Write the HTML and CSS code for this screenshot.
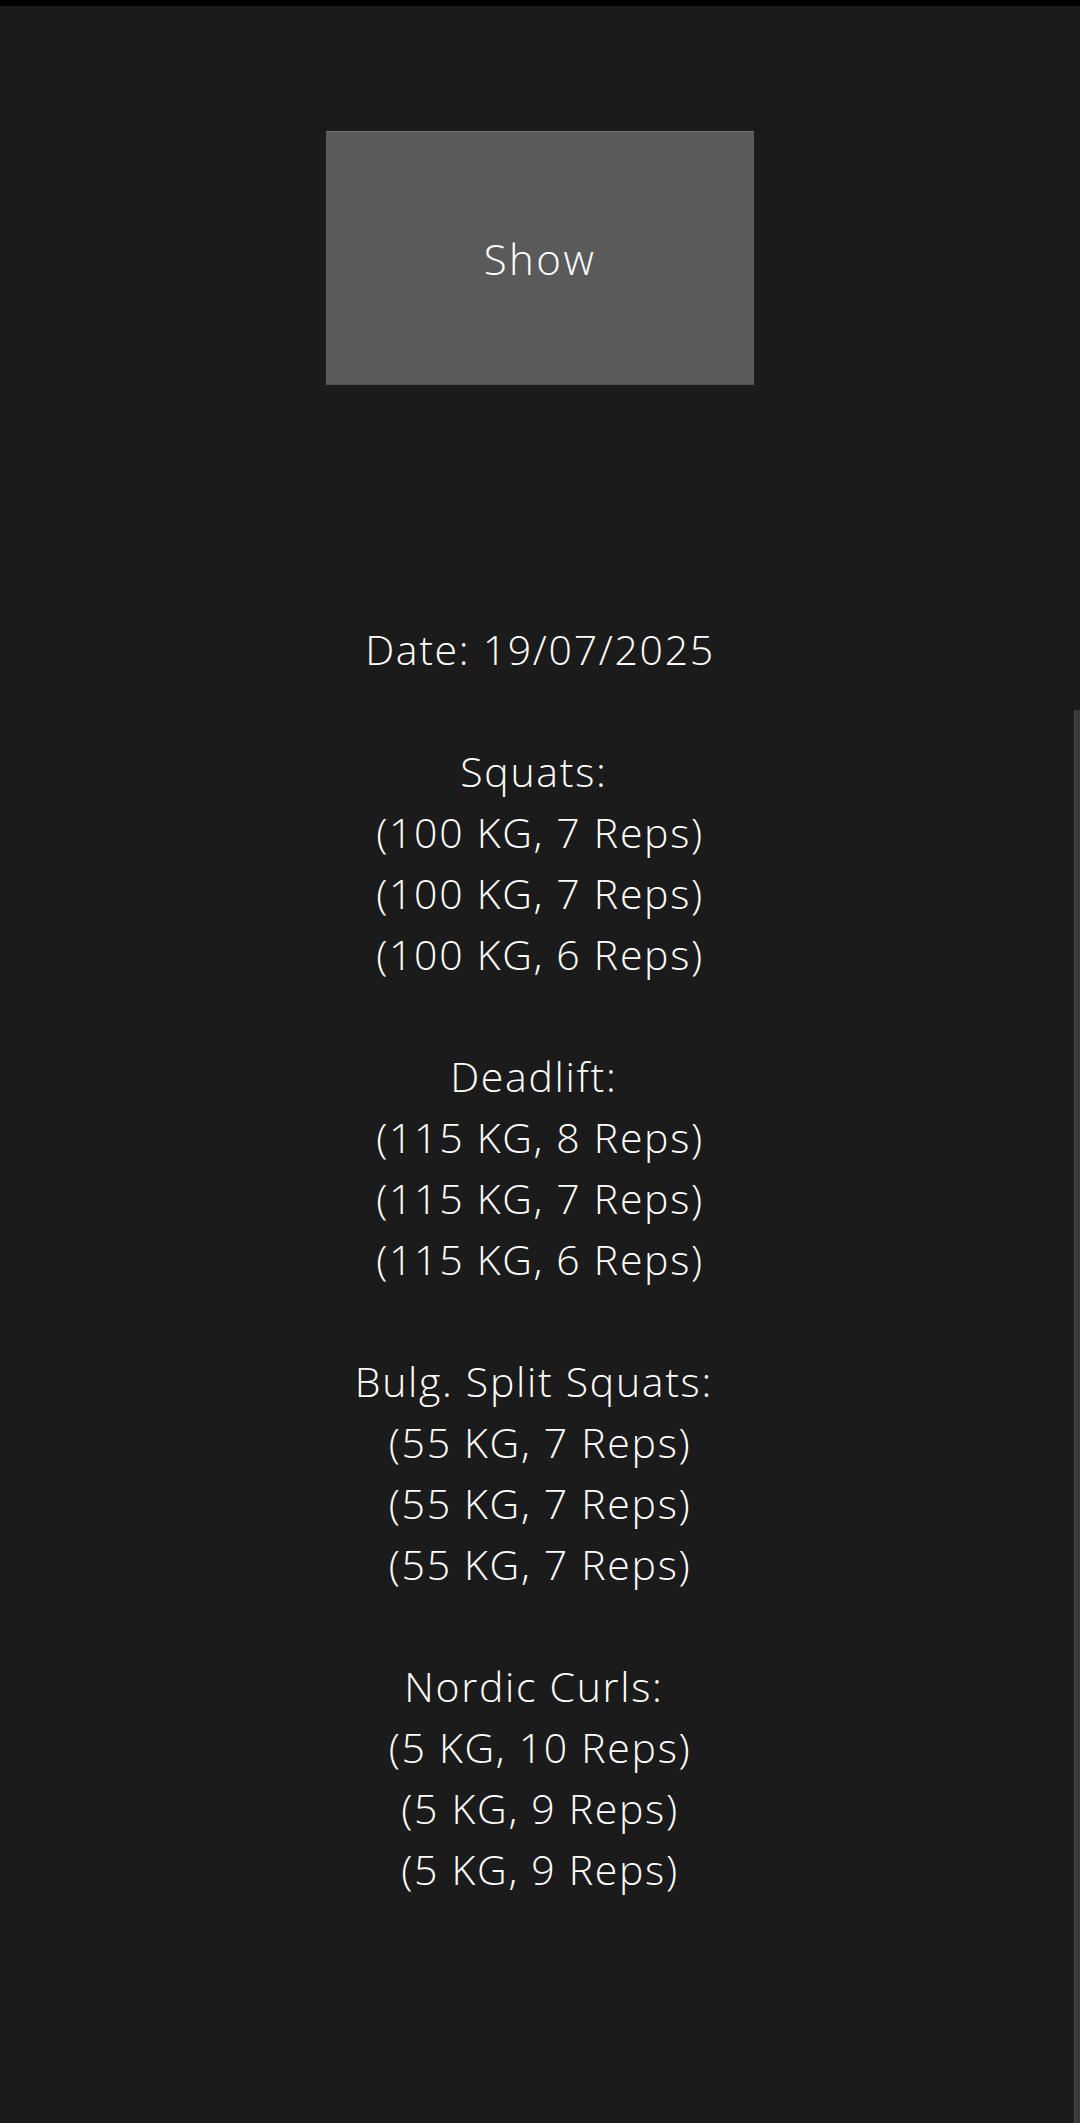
FILE: index.html
```html
<!DOCTYPE html>
<html lang="en">
<head>
<meta charset="utf-8">
<title>Workout Log</title>
<link rel="stylesheet" href="styles.css">
</head>
<body>
<div class="topbar"></div>
<main class="page">
  <button class="show-btn" type="button">Show</button>
  <div class="log">
    <div class="line">Date: 19/07/2025</div>
    <section class="exercise">
      <div class="line">Squats:&nbsp;</div>
      <div class="line">(100 KG, 7 Reps)</div>
      <div class="line">(100 KG, 7 Reps)</div>
      <div class="line">(100 KG, 6 Reps)</div>
    </section>
    <section class="exercise">
      <div class="line">Deadlift:&nbsp;</div>
      <div class="line">(115 KG, 8 Reps)</div>
      <div class="line">(115 KG, 7 Reps)</div>
      <div class="line">(115 KG, 6 Reps)</div>
    </section>
    <section class="exercise">
      <div class="line">Bulg. Split Squats:&nbsp;</div>
      <div class="line">(55 KG, 7 Reps)</div>
      <div class="line">(55 KG, 7 Reps)</div>
      <div class="line">(55 KG, 7 Reps)</div>
    </section>
    <section class="exercise">
      <div class="line">Nordic Curls:&nbsp;</div>
      <div class="line">(5 KG, 10 Reps)</div>
      <div class="line">(5 KG, 9 Reps)</div>
      <div class="line">(5 KG, 9 Reps)</div>
    </section>
  </div>
</main>
<div class="scroll-thumb"></div>
</body>
</html>
```

FILE: styles.css
```css
html, body {
  margin: 0;
  padding: 0;
}

body {
  background: #1b1b1b;
  color: #ffffff;
  font-family: "Open Sans", "Noto Sans", sans-serif;
  font-weight: 300;
  min-height: 2123px;
  position: relative;
  overflow: hidden;
}

.topbar {
  height: 6px;
  background: #000000;
}

.page {
  display: flex;
  flex-direction: column;
  align-items: center;
  padding-top: 125px;
}

.show-btn {
  width: 428px;
  height: 254px;
  background: #5a5a5a;
  border: none;
  border-top: 1px solid #6c6c6c;
  border-bottom: 1px solid #505050;
  color: #ffffff;
  font-family: "Open Sans", "Noto Sans", sans-serif;
  font-weight: 300;
  font-size: 42px;
  letter-spacing: 2.5px;
  padding: 0;
  margin: 0;
}

.log {
  margin-top: 234px;
  text-align: center;
  font-size: 41px;
  letter-spacing: 1.7px;
  line-height: 61px;
}

.exercise {
  margin-top: 61px;
}

.line {
  white-space: nowrap;
}

.scroll-thumb {
  position: absolute;
  right: 0;
  top: 710px;
  bottom: 0;
  width: 5px;
  background: #3a3a3a;
  border-left: 1px solid #4a4a4a;
}
```
